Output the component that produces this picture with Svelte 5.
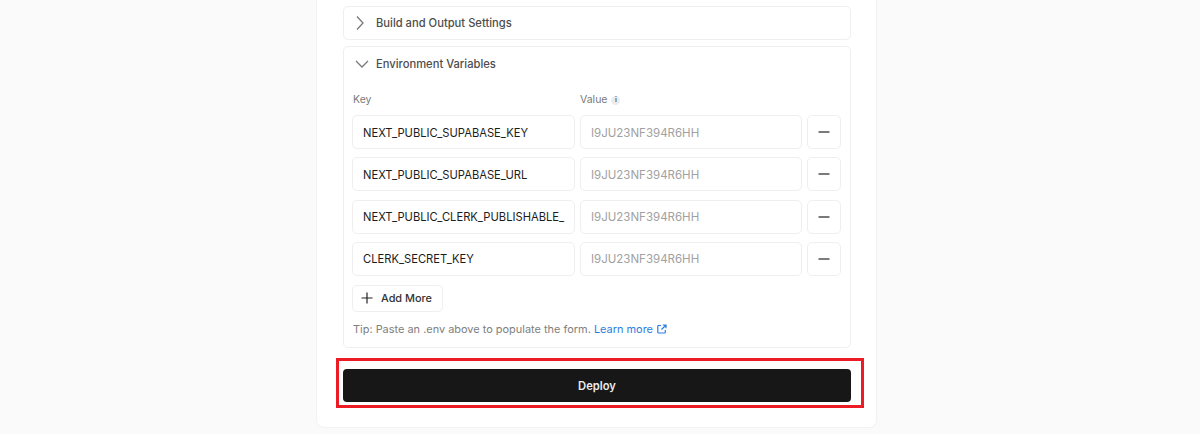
<script>
  // third key is what the narrow field leaves visible
  const rows = [
    'NEXT_PUBLIC_SUPABASE_KEY',
    'NEXT_PUBLIC_SUPABASE_URL',
    'NEXT_PUBLIC_CLERK_PUBLISHABLE_',
    'CLERK_SECRET_KEY'
  ];
</script>

<div class="page">
  <div class="card">
    <div class="panel collapsed">
      <svg class="chev" width="16" height="16" viewBox="0 0 16 16"><path d="M5 1.500 11 8l-6 6.500" /></svg>
      <span class="title">Build and Output Settings</span>
    </div>

    <div class="panel env">
      <div class="env-head">
        <svg class="chev" width="16" height="16" viewBox="0 0 16 16"><path d="M2 5 8 11l6-6" /></svg>
        <span class="title">Environment Variables</span>
      </div>

      <div class="labels">
        <span>Key</span>
        <span class="value-label">Value
          <span class="info">i</span>
        </span>
      </div>

      <div class="rows">
        {#each rows as key}
          <div class="row">
            <div class="field key">{key}</div>
            <div class="field val">I9JU23NF394R6HH</div>
            <button class="minus" aria-label="Remove">
              <svg width="12" height="12" viewBox="0 0 12 12"><path d="M0.500 6h11" /></svg>
            </button>
          </div>
        {/each}
      </div>

      <button class="add">
        <svg width="12" height="12" viewBox="0 0 12 12"><path d="M6 0.500v11M0.500 6h11" /></svg>
        Add More
      </button>

      <p class="tip">
        Tip: Paste an .env above to populate the form.
        <a href="#learn">Learn more
          <svg width="10" height="10" viewBox="0 0 10 10"><path d="M4 1.500H1.500a.700.700 0 0 0-.700.700v6.100c0 .400.300.700.700.700h6.100c.400 0 .700-.300.700-.700V6M5.800 1h3.200v3.200M9 1 4.500 5.500" /></svg>
        </a>
      </p>
    </div>

    <div class="deploy-wrap">
      <button class="deploy">Deploy</button>
      <div class="highlight"></div>
    </div>
  </div>
</div>

<style>
  :global(body) {
    background: #fafafa;
  }

  .page {
    height: 434px;
    overflow: hidden;
    font-family: Inter, "Liberation Sans", sans-serif;
  }

  .card {
    box-sizing: border-box;
    width: 561px;
    height: 428px;
    margin-left: 316px;
    padding: 6px 25px 0 26px;
    background: #fff;
    border: 1px solid #f2f2f2;
    border-top: none;
    border-radius: 0 0 8px 8px;
  }

  .panel {
    box-sizing: border-box;
    border: 1px solid #efefef;
    border-radius: 5px;
    background: #fff;
  }

  .collapsed {
    display: flex;
    align-items: center;
    gap: 8px;
    height: 34px;
    padding-left: 8px;
  }

  .env {
    height: 302px;
    margin-top: 6px;
    padding: 8px 9px 0 8px;
  }

  .env-head {
    display: flex;
    align-items: center;
    gap: 6px;
    height: 17px;
    padding-left: 2px;
  }

  .title {
    font-size: 11.200px;
    font-weight: 500;
    color: #4d4d4d;
  }

  .chev path {
    fill: none;
    stroke: #7a7a7a;
    stroke-width: 1.300;
  }

  .labels {
    display: flex;
    margin-top: 21px;
    padding-left: 1px;
    font-size: 10.500px;
    line-height: 14px;
    color: #7b7b7b;
  }

  .labels > span:first-child {
    width: 227px;
  }

  .value-label {
    display: flex;
    align-items: center;
    gap: 4px;
  }

  .info {
    display: flex;
    align-items: center;
    justify-content: center;
    width: 9px;
    height: 9px;
    border-radius: 50%;
    background: #ececec;
    color: #666;
    font-size: 7px;
    font-weight: 700;
  }

  .rows {
    display: flex;
    flex-direction: column;
    gap: 8.300px;
    margin-top: 8px;
  }

  .row {
    display: flex;
    gap: 5px;
  }

  .field {
    box-sizing: border-box;
    display: flex;
    align-items: center;
    height: 34px;
    padding: 1px 10px 0;
    background: #fff;
    border: 1px solid #efefef;
    border-radius: 5px;
    white-space: nowrap;
  }

  .key {
    width: 223px;
    font-size: 11.200px;
    color: #1c1c1c;
  }

  .val {
    width: 222px;
    font-size: 11.500px;
    color: #a1a1a1;
  }

  .minus {
    box-sizing: border-box;
    display: flex;
    align-items: center;
    justify-content: center;
    width: 34px;
    height: 34px;
    padding: 0;
    background: #fff;
    border: 1px solid #efefef;
    border-radius: 5px;
  }

  .minus path,
  .add path {
    fill: none;
    stroke: #222;
    stroke-width: 1.200;
  }

  .add {
    box-sizing: border-box;
    display: flex;
    align-items: center;
    gap: 8px;
    width: 91px;
    height: 27px;
    margin-top: 9px;
    padding: 0 0 0 8px;
    background: #fff;
    border: 1px solid #efefef;
    border-radius: 5px;
    font-family: inherit;
    font-size: 10.900px;
    font-weight: 500;
    color: #333;
  }

  .tip {
    margin: 10px 0 0;
    padding-left: 1px;
    font-size: 10.950px;
    line-height: 14px;
    color: #808080;
  }

  .tip a {
    color: #2a7de1;
    text-decoration: none;
  }

  .tip a svg {
    margin-left: 1px;
    vertical-align: -1px;
  }

  .tip a path {
    fill: none;
    stroke: #2a7de1;
    stroke-width: 1.200;
  }

  .deploy-wrap {
    position: relative;
    margin-top: 21px;
  }

  .deploy {
    display: block;
    width: 508px;
    height: 33px;
    padding: 0;
    background: #171717;
    border: none;
    border-radius: 4px;
    font-family: inherit;
    font-size: 11.200px;
    font-weight: 600;
    color: #ececec;
  }

  /* annotation box drawn over the screenshot */
  .highlight {
    position: absolute;
    left: -7px;
    top: -11px;
    width: 528px;
    height: 50px;
    box-sizing: border-box;
    border: 3px solid #ed1c24;
    pointer-events: none;
  }
</style>
